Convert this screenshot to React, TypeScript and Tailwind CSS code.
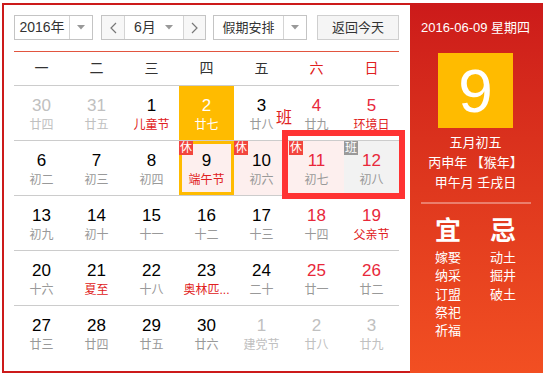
import React from "react";

type Day = {
  n: number;
  sub: string;
  other?: boolean;
  weekend?: boolean;
  fest?: boolean;
  badge?: "休" | "班";
  selected?: boolean;
  today?: boolean;
  gray?: boolean;
  pink?: boolean;
};

const WEEK = ["一", "二", "三", "四", "五", "六", "日"];

const ROWS: Day[][] = [
  [
    { n: 30, sub: "廿四", other: true },
    { n: 31, sub: "廿五", other: true },
    { n: 1, sub: "儿童节", fest: true },
    { n: 2, sub: "廿七", selected: true },
    { n: 3, sub: "廿八" },
    { n: 4, sub: "廿九", weekend: true },
    { n: 5, sub: "环境日", weekend: true, fest: true },
  ],
  [
    { n: 6, sub: "初二" },
    { n: 7, sub: "初三" },
    { n: 8, sub: "初四" },
    { n: 9, sub: "端午节", fest: true, badge: "休", today: true, pink: true },
    { n: 10, sub: "初六", badge: "休", pink: true },
    { n: 11, sub: "初七", badge: "休", weekend: true, pink: true },
    { n: 12, sub: "初八", badge: "班", weekend: true, gray: true },
  ],
  [
    { n: 13, sub: "初九" },
    { n: 14, sub: "初十" },
    { n: 15, sub: "十一" },
    { n: 16, sub: "十二" },
    { n: 17, sub: "十三" },
    { n: 18, sub: "十四", weekend: true },
    { n: 19, sub: "父亲节", weekend: true, fest: true },
  ],
  [
    { n: 20, sub: "十六" },
    { n: 21, sub: "夏至", fest: true },
    { n: 22, sub: "十八" },
    { n: 23, sub: "奥林匹...", fest: true },
    { n: 24, sub: "二十" },
    { n: 25, sub: "廿一", weekend: true },
    { n: 26, sub: "廿二", weekend: true },
  ],
  [
    { n: 27, sub: "廿三" },
    { n: 28, sub: "廿四" },
    { n: 29, sub: "廿五" },
    { n: 30, sub: "廿六" },
    { n: 1, sub: "建党节", other: true },
    { n: 2, sub: "廿八", other: true },
    { n: 3, sub: "廿九", other: true },
  ],
];

function Caret() {
  return (
    <svg width="8" height="5" viewBox="0 0 8 5" className="shrink-0">
      <path d="M0 0h8L4 4.5z" fill="#999" />
    </svg>
  );
}

function Chevron({ dir }: { dir: "left" | "right" }) {
  return (
    <svg width="7" height="12" viewBox="0 0 7 12">
      <path
        d={dir === "left" ? "M6 1L1 6l5 5" : "M1 1l5 5-5 5"}
        fill="none"
        stroke="#777"
        strokeWidth="1.2"
      />
    </svg>
  );
}

function Cell({ d }: { d: Day }) {
  let numColor = "text-black";
  let subColor = "text-[#999]";
  if (d.weekend) numColor = "text-[#e8283a]";
  if (d.fest) subColor = "text-[#e02020]";
  if (d.other) {
    numColor = "text-[#c0c0c0]";
    subColor = "text-[#c0c0c0]";
  }
  let bg = "";
  if (d.selected) {
    bg = "bg-[#ffbb00]";
    numColor = "text-white";
    subColor = "text-white";
  } else if (d.pink) bg = "bg-[#fdefee]";
  else if (d.gray) bg = "bg-[#f2f2f2]";

  return (
    <div
      className={`relative flex flex-col items-center ${bg} ${
        d.today ? "border-[3px] border-[#ffbb00] pt-[6px]" : "pt-[9px]"
      }`}
    >
      {d.badge && (
        <span
          className={`absolute flex h-[14px] w-[14px] items-center justify-center text-[12px] leading-none text-white ${
            d.today ? "-left-[3px] -top-[3px]" : "left-0 top-0"
          } ${d.badge === "休" ? "bg-[#f2453d]" : "bg-[#999]"}`}
        >
          {d.badge}
        </span>
      )}
      <span className={`text-[17px] leading-[22px] ${numColor}`}>{d.n}</span>
      <span className={`whitespace-nowrap text-[12px] leading-[16px] ${subColor}`}>
        {d.sub}
      </span>
    </div>
  );
}

export default function App() {
  return (
    <div
      className="relative h-[376px] w-[543px] overflow-hidden bg-white"
      style={{ fontFamily: '"Liberation Sans", "Noto Sans CJK SC", sans-serif' }}
    >
      <div className="ml-[2px] mt-[3px] flex h-[370px]">
        {/* left: calendar */}
        <div className="h-full w-[408px] border-b-2 border-l-2 border-t-2 border-[#cc1a1a] pl-[10px] pt-[10px]">
          <div className="flex h-[25px] items-stretch text-[13px] text-[#333]">
            <div className="flex w-[79px] border border-[#c4c4c4]">
              <div className="flex flex-1 items-center justify-center text-[14px]">2016年</div>
              <div className="flex w-[23px] items-center justify-center border-l border-[#d4d4d4]">
                <Caret />
              </div>
            </div>
            <div className="ml-[8px] flex w-[105px] border border-[#c4c4c4]">
              <div className="flex w-[22px] items-center justify-center bg-[#f7f7f7]">
                <Chevron dir="left" />
              </div>
              <div className="flex flex-1 items-center border-l border-r border-[#d4d4d4] pl-[9px] pr-[10px]">
                <span className="flex-1 whitespace-nowrap text-[14px]">6月</span>
                <Caret />
              </div>
              <div className="flex w-[21px] items-center justify-center bg-[#f7f7f7]">
                <Chevron dir="right" />
              </div>
            </div>
            <div className="ml-[7px] flex w-[94px] border border-[#c4c4c4]">
              <div className="flex flex-1 items-center justify-center">假期安排</div>
              <div className="flex w-[23px] items-center justify-center border-l border-[#d4d4d4]">
                <Caret />
              </div>
            </div>
            <div className="ml-[10px] flex w-[82px] items-center justify-center border border-[#cfcfcf] bg-[#f5f5f5]">
              返回今天
            </div>
          </div>

          <div className="mt-[11px] h-px w-[385px] bg-[#e2553f]" />

          <div className="w-[385px]">
            <div className="grid h-[34px] grid-cols-7 border-b border-[#cccccc]">
              {WEEK.map((w, i) => (
                <div
                  key={w}
                  className={`flex items-center justify-center text-[14px] ${
                    i >= 5 ? "text-[#e02020]" : "text-[#333]"
                  }`}
                >
                  {w}
                </div>
              ))}
            </div>
            {ROWS.map((row, ri) => (
              <div
                key={ri}
                className={`grid h-[55px] grid-cols-7 ${
                  ri < ROWS.length - 1 ? "border-b border-[#cccccc]" : ""
                }`}
              >
                {row.map((d, ci) => (
                  <Cell key={ci} d={d} />
                ))}
              </div>
            ))}
          </div>
        </div>

        {/* right: day detail */}
        <div className="flex h-full w-[133px] flex-col items-center bg-gradient-to-b from-[#cc1a1a] to-[#f24f22] pr-[2px] text-white">
          <div className="mt-[17px] text-[13px] leading-[16px]">2016-06-09 星期四</div>
          <div className="mt-[17px] flex h-[75px] w-[75px] items-center justify-center bg-[#ffbb00] text-[62px] font-light leading-none">
            9
          </div>
          <div className="mt-[5px] text-center text-[13px] leading-[20px]">
            <div>五月初五</div>
            <div>丙申年 【猴年】</div>
            <div>甲午月 壬戌日</div>
          </div>
          <div className="mt-[9px] h-[2px] w-[110px] bg-white/35" />
          <div className="mt-[12px] flex gap-[29px]">
            <div className="flex w-[26px] flex-col">
              <div className="text-center text-[26px] font-bold leading-[30px]">宜</div>
              <div className="mt-[3px] whitespace-nowrap text-[13px] leading-[18.3px]">
                <div>嫁娶</div>
                <div>纳采</div>
                <div>订盟</div>
                <div>祭祀</div>
                <div>祈福</div>
              </div>
            </div>
            <div className="flex w-[26px] flex-col">
              <div className="text-center text-[26px] font-bold leading-[30px]">忌</div>
              <div className="mt-[3px] whitespace-nowrap text-[13px] leading-[18.3px]">
                <div>动土</div>
                <div>掘井</div>
                <div>破土</div>
              </div>
            </div>
          </div>
        </div>
      </div>

      {/* annotations over the grid */}
      <span className="absolute left-[276px] top-[108px] text-[16px] leading-[20px] text-[#e02020]">
        班
      </span>
      <div className="pointer-events-none absolute left-[282px] top-[130px] h-[69px] w-[123px] border-[6px] border-[#ff3333]" />
    </div>
  );
}
